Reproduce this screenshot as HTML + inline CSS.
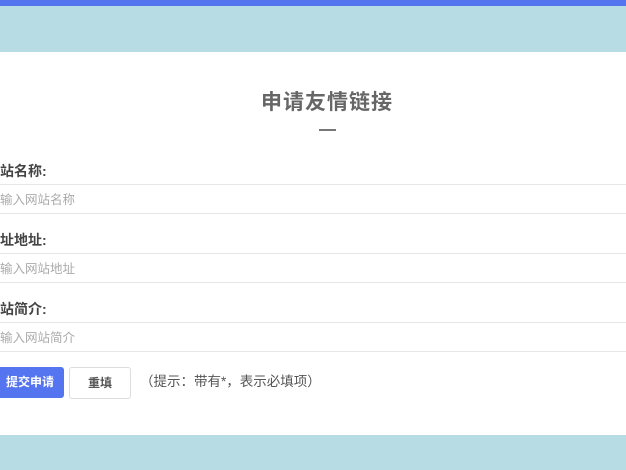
<!DOCTYPE html>
<html><head><meta charset="utf-8"><style>
*{margin:0;padding:0;box-sizing:border-box}
body{width:626px;height:470px;overflow:hidden;background:#b8dce3;font-family:"Liberation Sans","Noto Sans CJK SC",sans-serif;position:relative}
.top{position:absolute;left:0;top:0;width:626px;height:6px;background:#5474f0}
.main{position:absolute;left:0;top:52px;width:626px;height:383px;background:#fff}
.t{position:absolute;top:89px;left:0;width:654px;text-align:center;font-size:21px;font-weight:bold;color:#666;line-height:28px;letter-spacing:1px}
.dash{position:absolute;left:319px;top:129px;width:17px;height:2px;background:#777}
.l{position:absolute;left:0;font-size:14px;color:#444;line-height:18px;font-weight:bold}
.in{position:absolute;left:-2px;width:630px;height:30px;border-top:1px solid #e4e6e8;border-bottom:1px solid #e4e6e8;font-size:12.5px;color:#aaa;line-height:30px;padding-left:2px}
.b1{position:absolute;left:-4px;top:367px;width:68px;height:31px;background:#5474f0;border-radius:3px;color:#fff;font-size:12px;line-height:31px;text-align:center;font-weight:bold}
.b2{position:absolute;left:69px;top:367px;width:62px;height:32px;border:1px solid #ddd;border-radius:3px;color:#555;font-size:12px;line-height:30px;text-align:center;font-weight:bold}
.h{position:absolute;left:140px;top:373px;font-size:13.5px;color:#555;line-height:18px}
</style></head><body>
<div class="top"></div>
<div class="main"></div>
<div class="t">申请友情链接</div>
<div class="dash"></div>
<div class="l" style="top:162px">站名称:</div>
<div class="in" style="top:184px">输入网站名称</div>
<div class="l" style="top:231px">址地址:</div>
<div class="in" style="top:253px">输入网站地址</div>
<div class="l" style="top:300px">站简介:</div>
<div class="in" style="top:322px">输入网站简介</div>
<div class="b1">提交申请</div>
<div class="b2">重填</div>
<div class="h">（提示：带有*，表示必填项）</div>
</body></html>
